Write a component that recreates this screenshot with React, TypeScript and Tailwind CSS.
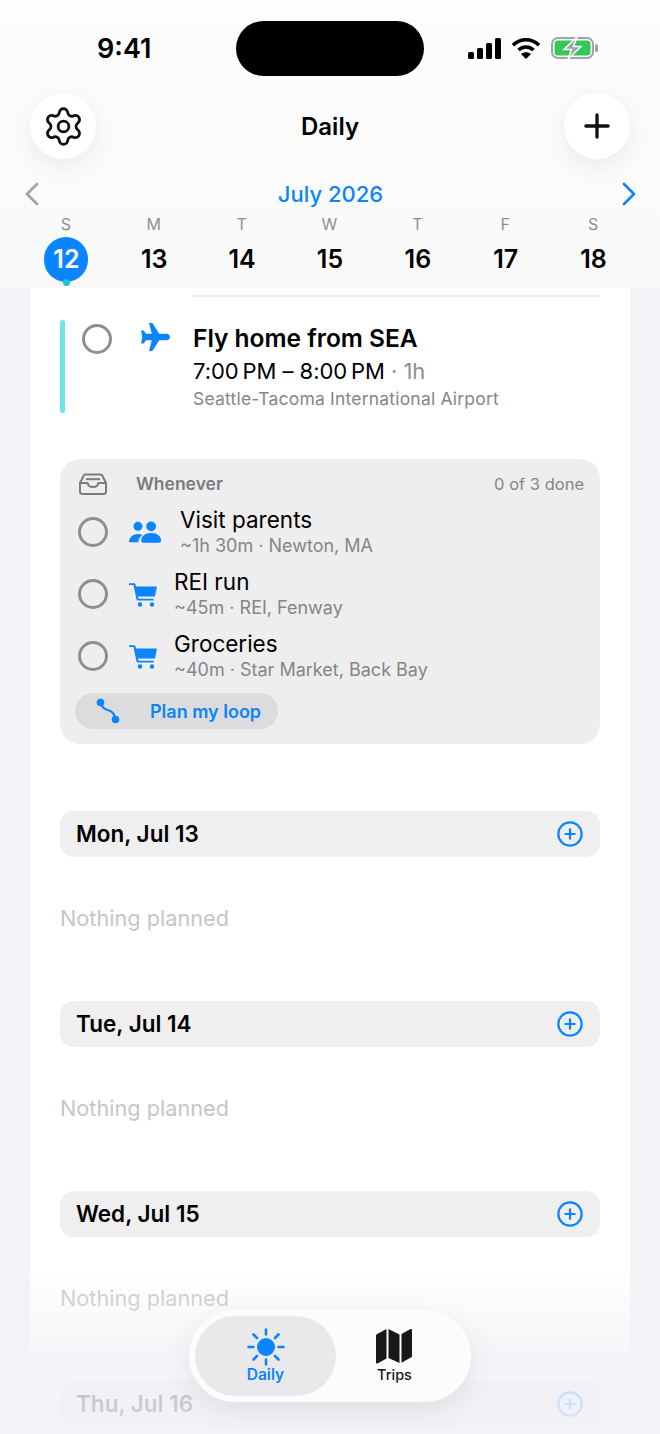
import React from "react";
import { Settings, Plus, CirclePlus } from "lucide-react";

const days = [["S","12"],["M","13"],["T","14"],["W","15"],["T","16"],["F","17"],["S","18"]];

function Cart() {
  return (
    <svg width="30" height="28" viewBox="0 0 30 28" fill="#0a84ff">
      <path d="M1 3.2h5.2c.6 0 1 .3 1.2.9l3 14.6h15.2v1.8H9.6c-.5 0-.9-.3-1-.8L5.5 5H1z" />
      <path d="M7.6 6.5H29l-2 10H9.7z" />
      <circle cx="12" cy="24.5" r="2.2" />
      <circle cx="24" cy="24.5" r="2.2" />
    </svg>
  );
}

function Circle() {
  return <div className="w-[30px] h-[30px] rounded-full border-[3px] border-[#8e8e93] shrink-0" />;
}

function Item({ icon, title, sub, x }: { icon: React.ReactNode; title: string; sub: string; x: string }) {
  return (
    <div className="flex items-center h-[62px] pl-[18px]">
      <Circle />
      <div className="w-[36px] ml-[17px] flex justify-center shrink-0">{icon}</div>
      <div className={x}>
        <div className="text-[22.5px] leading-[28px] text-black">{title}</div>
        <div className="text-[18px] leading-[24px] text-[#85858a]">{sub}</div>
      </div>
    </div>
  );
}

function Day({ label, empty = true }: { label: string; empty?: boolean }) {
  return (
    <div className="h-[190px] shrink-0">
      <div className="mx-[30px] h-[46px] rounded-[14px] bg-[#efeff0] flex items-center justify-between pl-[16px] pr-[16px]">
        <span className="text-[22.5px] font-semibold text-black">{label}</span>
        <CirclePlus size={28} strokeWidth={1.9} color="#0a84ff" />
      </div>
      {empty && <div className="mx-[30px] mt-[47px] text-[21.7px] leading-[28px] text-[#c6c6c8]">Nothing planned</div>}
    </div>
  );
}

export default function App() {
  return (
    <div className="relative w-[660px] h-[1434px] overflow-hidden bg-[#f2f2f7] font-['Inter','Liberation_Sans',sans-serif]">
      <header className="h-[288px] bg-gradient-to-b from-[#fdfdfe] to-[#f9f9fa] flex flex-col">
        <div className="relative h-[93px] shrink-0">
          <span className="absolute left-[97px] top-[32px] text-[27px] leading-[34px] font-semibold text-black">9:41</span>
          <div className="absolute left-[236px] top-[21px] w-[188px] h-[55px] rounded-full bg-black" />
          <div className="absolute left-[467px] top-[37px] flex items-center gap-[10px]">
            <svg width="34" height="21" viewBox="0 0 34 21" fill="#000">
              <rect x="1" y="14" width="6" height="7" rx="1.5" />
              <rect x="10" y="10" width="6" height="11" rx="1.5" />
              <rect x="19" y="5" width="6" height="16" rx="1.5" />
              <rect x="28" y="0" width="6" height="21" rx="1.5" />
            </svg>
            <svg width="30" height="22" viewBox="0 0 30 22" fill="none" stroke="#000" strokeWidth="3.6">
              <path d="M2 8.2C9.5 1 20.5 1 28 8.2" />
              <path d="M7.5 13C12 9 18 9 22.5 13" />
              <path d="M15 22l-5-5c3-2.400 7-2.400 10 0z" fill="#000" stroke="none" />
            </svg>
            <svg width="47" height="22" viewBox="0 0 47 22">
              <rect x="1" y="1" width="41" height="20" rx="6" fill="none" stroke="#a3a3a6" strokeWidth="2" />
              <rect x="3.500" y="3.500" width="36" height="15" rx="3.500" fill="#34c759" />
              <rect x="44" y="7" width="3" height="8" rx="1.500" fill="#a3a3a6" />
              <path d="M26 0L13 12.500h7.500L17 22l13-12.500h-7.500z" fill="#a3a3a6" stroke="#f8f8f9" strokeWidth="1.500" />
            </svg>
          </div>
        </div>
        <div className="flex items-center justify-between px-[30px] h-[66px] shrink-0">
          <div className="w-[66px] h-[66px] rounded-full bg-white flex items-center justify-center shadow-[0_6px_24px_rgba(0,0,0,0.07)]">
            <Settings size={43} strokeWidth={1.55} color="#111" />
          </div>
          <span className="pt-[2px] text-[24px] font-semibold text-black">Daily</span>
          <div className="w-[66px] h-[66px] rounded-full bg-white flex items-center justify-center shadow-[0_6px_24px_rgba(0,0,0,0.07)]">
            <Plus size={38} strokeWidth={2.1} color="#111" />
          </div>
        </div>
        <div className="flex items-center justify-between pl-[25px] pr-[24px] h-[30px] mt-[20px] shrink-0">
          <svg width="14" height="24" viewBox="0 0 14 24" fill="none" stroke="#a2a2a6" strokeWidth="2.700" strokeLinecap="round" strokeLinejoin="round">
            <path d="M12 2L2 12l10 10" />
          </svg>
          <span className="text-[22px] font-medium text-[#0a84ff]">July 2026</span>
          <svg width="14" height="24" viewBox="0 0 14 24" fill="none" stroke="#0a84ff" strokeWidth="2.700" strokeLinecap="round" strokeLinejoin="round">
            <path d="M2 2l10 10L2 22" />
          </svg>
        </div>
        <div className="grid grid-cols-7 w-[615px] ml-[22px] mt-[5px]">
          {days.map(([d, n], i) => (
            <div key={i} className="flex flex-col items-center">
              <span className="text-[16px] leading-[20px] text-[#8e8e93]">{d}</span>
              <div className={`relative mt-[3px] w-[44px] h-[45px] pl-[1px] rounded-full flex items-center justify-center text-[25px] font-semibold ${i === 0 ? "bg-[#0a84ff] text-white" : "text-black"}`}>
                {n}
                {i === 0 && <span className="absolute left-[19px] bottom-[-4px] w-[7px] h-[7px] rounded-full bg-[#14c8d4]" />}
              </div>
            </div>
          ))}
        </div>
      </header>

      <main className="mx-[30px] bg-white min-h-[1146px] flex flex-col">
        <div className="ml-[162px] mr-[30px] mt-[7px] h-[2px] bg-[#ececee]" />
        <div className="flex mt-[23px] ml-[30px] h-[93px]">
          <div className="w-[5px] h-full rounded-full bg-[#6fe3e8]" />
          <div className="ml-[17px] mt-[4px]"><Circle /></div>
          <div className="ml-[29px] mt-[3px]">
            <svg width="29" height="28" viewBox="0 0 29 28" fill="#0a84ff">
              <path d="M8 0h3.400l6.800 10.800h7.300c2 0 3.500 1.500 3.500 3.200s-1.500 3.200-3.500 3.200h-7.300L11.400 28H8l2.800-10.800H5l-2.300 3.200H0L1.300 14 0 7.600h2.700L5 10.800h5.800z" />
            </svg>
          </div>
          <div className="ml-[23px]">
            <div className="text-[24.5px] leading-[36px] font-semibold text-black">Fly home from SEA</div>
            <div className="text-[22px] leading-[30px] tracking-[-0.05px] text-black">7:00&#8201;PM – 8:00&#8201;PM <span className="text-[#8e8e93]">· 1h</span></div>
            <div className="text-[17.5px] leading-[26px] text-[#85858a] tracking-[0.2px]">Seattle-Tacoma International Airport</div>
          </div>
        </div>

        <section className="mx-[30px] mt-[46px] h-[285px] rounded-[20px] bg-[#eeeeef]">
          <div className="flex items-center h-[50px] pl-[19px] pr-[16px]">
            <svg width="28" height="22" viewBox="0 0 28 22" fill="none" stroke="#7b7b80" strokeWidth="2" strokeLinejoin="round">
              <path d="M1 10l3.500-7c.3-.8 1-1.500 2-1.500h15c1 0 1.700.7 2 1.500L27 10v8.500c0 1.200-1 2.500-2.500 2.500h-21C2 21 1 19.700 1 18.500z" />
              <path d="M1 10h7c.5 0 1 .4 1 1 .5 2 2.500 3 5 3s4.500-1 5-3c0-.6.500-1 1-1h7" />
              <path d="M7 6.200h14" />
            </svg>
            <span className="ml-[29px] text-[17.5px] font-semibold text-[#7b7b80]">Whenever</span>
            <span className="ml-auto text-[16.5px] text-[#85858a]">0 of 3 done</span>
          </div>
          <div className="mt-[-8px]">
            <Item
              x="ml-[19px]"
              title="Visit parents"
              sub="~1h 30m · Newton, MA"
              icon={
                <svg className="ml-[4px]" width="34" height="24" viewBox="0 0 34 24" fill="#0a84ff">
                  <circle cx="9.500" cy="6" r="4.800" />
                  <circle cx="23.500" cy="6" r="5.200" />
                  <path d="M0 23c0-5 3.500-9 9.500-9 2 0 3.700.5 5 1.300C11.800 17 10 19.500 10 23z" />
                  <path d="M13 21c0-4.500 4-8 10.500-8S34 16.500 34 21c0 1.500-1 2.500-3 2.500H16c-2 0-3-1-3-2.500z" />
                </svg>
              }
            />
            <Item x="ml-[13px]" title="REI run" sub="~45m · REI, Fenway" icon={<Cart />} />
            <Item x="ml-[13px]" title="Groceries" sub="~40m · Star Market, Back Bay" icon={<Cart />} />
          </div>
          <div className="ml-[15px] mt-[6px] w-[203px] h-[36px] rounded-full bg-[#dcdcde] flex items-center">
            <svg className="ml-[21px]" width="24" height="26" viewBox="0 0 24 26" fill="none">
              <circle cx="4.500" cy="4.500" r="3.800" fill="#0a84ff" />
              <circle cx="19.500" cy="21.500" r="3.800" fill="#0a84ff" />
              <path d="M4.500 5C6 10 9 11.500 13 12.500c3.500 1 5.500 3.500 6 8" stroke="#0a84ff" strokeWidth="2.200" />
            </svg>
            <span className="ml-[30px] text-[18px] font-semibold text-[#0a84ff]">Plan my loop</span>
          </div>
        </section>

        <div className="mt-[67px] flex flex-col">
          <Day label="Mon, Jul 13" />
          <Day label="Tue, Jul 14" />
          <Day label="Wed, Jul 15" />
          <Day label="Thu, Jul 16" empty={false} />
        </div>
      </main>

      <div className="absolute left-0 right-0 bottom-0 h-[164px] bg-gradient-to-b from-[rgba(242,242,247,0)] via-[rgba(242,242,247,0.72)] to-[rgba(242,242,247,0.9)]" />

      <nav className="absolute left-[189px] top-[1310px] w-[282px] h-[92px] rounded-full bg-[#fcfcfd] shadow-[0_8px_30px_rgba(0,0,0,0.08)] flex items-center p-[6px]">
        <div className="w-[141px] h-[80px] rounded-full bg-[#e9e9eb] flex flex-col items-center justify-center">
          <svg width="38" height="38" viewBox="0 0 38 38" fill="#0a84ff">
            <circle cx="19" cy="19" r="9" />
            <g stroke="#0a84ff" strokeWidth="2.600" strokeLinecap="round">
              <path d="M19 1.500v5M19 31.500v5M1.500 19h5M31.500 19h5M6.500 6.500l3.500 3.500M28 28l3.500 3.500M6.500 31.500L10 28M28 10l3.500-3.500" />
            </g>
          </svg>
          <span className="text-[15.5px] leading-[18px] font-semibold text-[#0a84ff]">Daily</span>
        </div>
        <div className="flex-1 flex flex-col items-center justify-center pr-[12px]">
          <svg className="mr-[2px]" width="36" height="36" viewBox="0 0 36 36" fill="#18181b">
            <path d="M0 7.500c0-.6.300-1 .8-1.300L10.500 1v29.500L1.500 35.500c-.7.300-1.500-.2-1.500-1z" />
            <path d="M12.500 1l11 5.500V35l-11-5z" />
            <path d="M25.500 6l9-5c.7-.3 1.500.2 1.500 1v26c0 .6-.3 1-.8 1.300l-9.700 5.500z" />
          </svg>
          <span className="mt-[2px] text-[14.5px] leading-[18px] font-medium text-[#18181b]">Trips</span>
        </div>
      </nav>
    </div>
  );
}
